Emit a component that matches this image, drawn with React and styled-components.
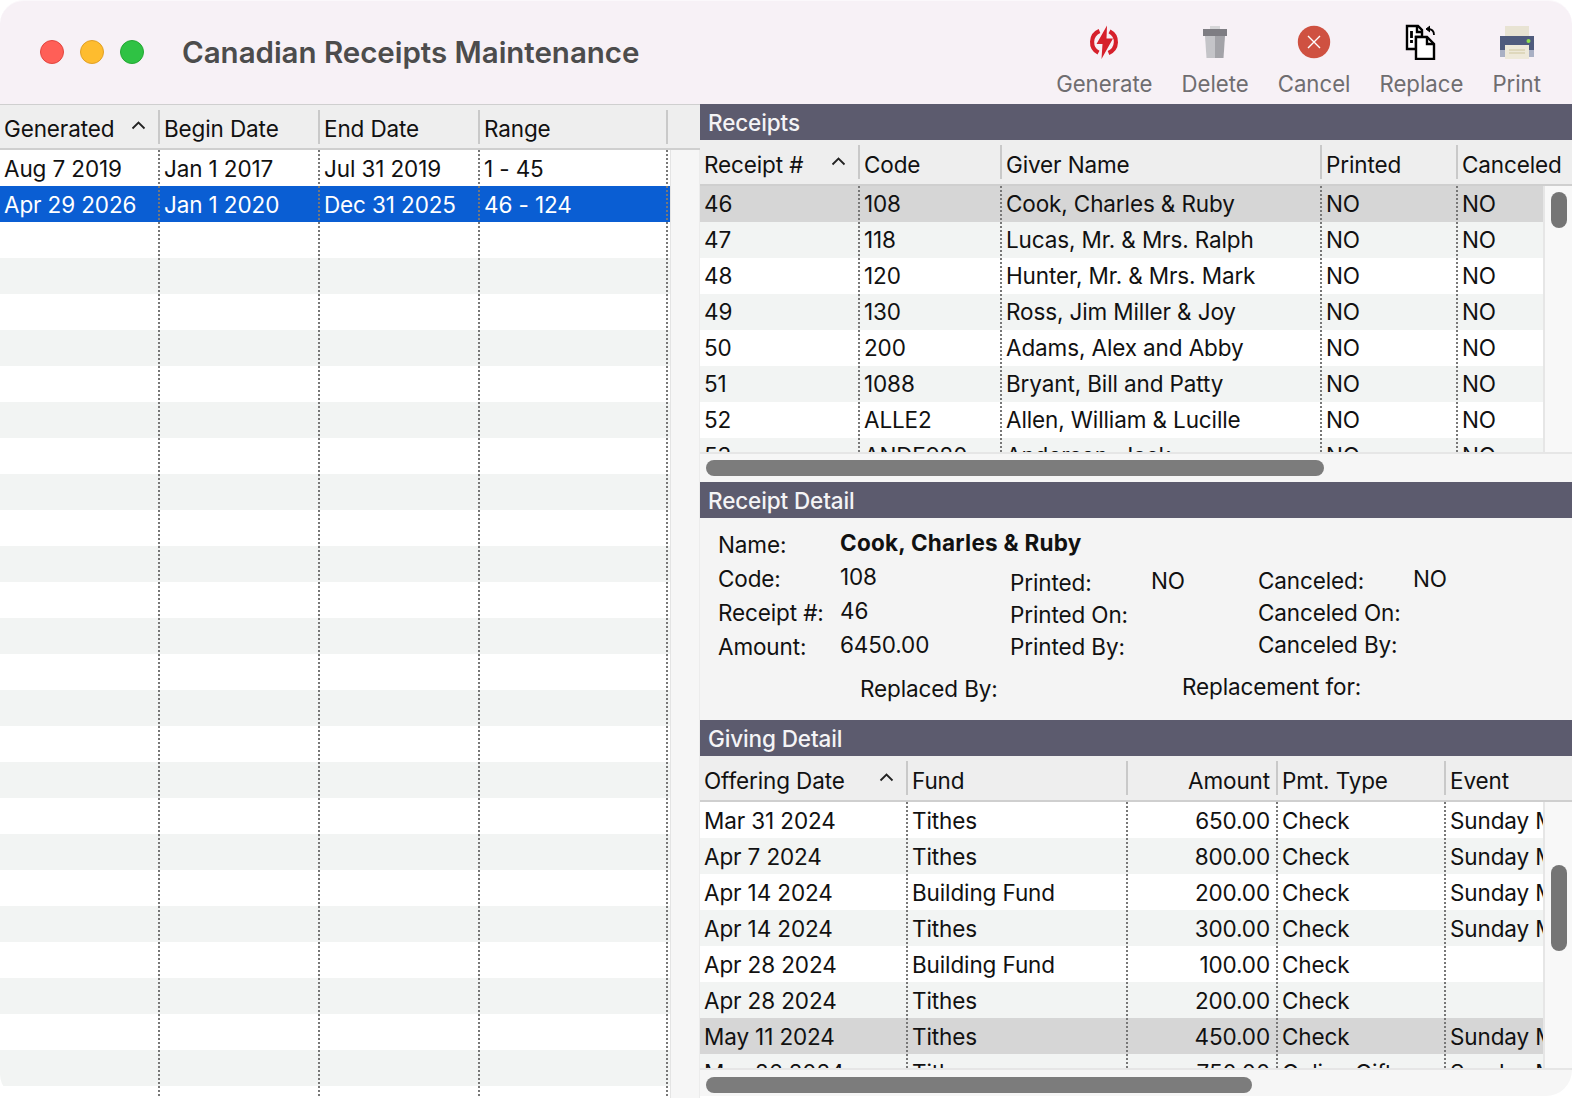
import React from "react";
import styled, { createGlobalStyle } from "styled-components";

const GlobalStyle = createGlobalStyle`
  html, body { margin: 0; padding: 0; background: #fff; }
  body { font-family: Inter, "Liberation Sans", sans-serif; color: #111; }
`;

const dotted = `linear-gradient(#777 50%, transparent 50%)`;

const Win = styled.div`
  width: 1572px;
  height: 1098px;
  overflow: hidden;
  display: flex;
  flex-direction: column;
  font-size: 22.5px;
  letter-spacing: -0.12px;
  background: #fff;
`;

const TitleBar = styled.header`
  height: 104px;
  flex: none;
  box-sizing: border-box;
  display: flex;
  align-items: flex-start;
  background: #f7f1f6;
  border-radius: 24px 24px 0 0;
  border-top: 1px solid #fbf8fb;
`;

const Lights = styled.div`
  display: flex;
  gap: 16px;
  margin: 39px 0 0 40px;
`;

const Light = styled.span`
  width: 24px;
  height: 24px;
  border-radius: 50%;
  box-sizing: border-box;
  background: ${p => p.$c};
  border: 1px solid ${p => p.$b};
`;

const Title = styled.h1`
  margin: 33px 0 0 38px;
  font-size: 29.5px;
  line-height: 36px;
  font-weight: 600;
  color: #4c4c4c;
  letter-spacing: -0.03px;
`;

const Toolbar = styled.div`
  margin-left: auto;
  display: flex;
  gap: 29px;
  padding: 23px 31px 0 0;
`;

const ToolButton = styled.div`
  display: flex;
  flex-direction: column;
  align-items: center;
  color: #6f6d70;
  font-size: 22.2px;
  letter-spacing: 0;
  line-height: 28px;
  svg { width: 36px; height: 36px; margin-bottom: 10px; display: block; }
`;

const Body = styled.div`
  flex: 1;
  min-height: 0;
  display: flex;
`;

const LeftPane = styled.section`
  width: 700px;
  flex: none;
  display: flex;
  flex-direction: column;
  border-bottom-left-radius: 24px;
  overflow: hidden;
  background: #fff;
`;

const Gutter = styled.div`
  flex: 1;
  background: #f6f6f6;
  border-left: 1px solid #e4e4e4;
  border-right: 1px solid #ececec;
`;

const LeftBody = styled.div`
  flex: 1;
  min-height: 0;
  display: flex;
`;

const LeftRows = styled.div`
  width: 670px;
  flex: none;
`;

const HeaderRow = styled.div`
  height: ${p => p.$h}px;
  box-sizing: border-box;
  display: flex;
  align-items: stretch;
  background: #eeeeee;
  border-top: ${p => (p.$top ? "1px solid #cfcfcf" : "0")};
  border-bottom: 2px solid #cfcfcf;
  flex: none;
  overflow: hidden;
`;

const HeaderCell = styled.div`
  width: ${p => p.$w}px;
  flex: none;
  box-sizing: border-box;
  padding: ${p => p.$pt}px 14px 0 4px;
  display: flex;
  align-items: center;
  justify-content: ${p => (p.$right ? "flex-end" : "space-between")};
  padding-right: ${p => (p.$right ? 8 : 14)}px;
  white-space: nowrap;
  background: linear-gradient(#c9c9c9, #c9c9c9) right center / 2px 34px no-repeat;
  background-image: ${p => (p.$last ? "none" : undefined)};
`;

const Row = styled.div`
  height: 36px;
  display: flex;
  background: ${p => (p.$sel === "blue" ? "#0a5ed3" : p.$sel === "grey" ? "#d6d6d6" : p.$alt ? "#f2f4f3" : "#fff")};
  color: ${p => (p.$sel === "blue" ? "#fff" : "#111")};
`;

const Cell = styled.div`
  width: ${p => p.$w}px;
  flex: none;
  box-sizing: border-box;
  padding: ${p => p.$pt || 0}px ${p => (p.$right ? 8 : 0)}px 0 4px;
  line-height: 36px;
  white-space: nowrap;
  overflow: hidden;
  text-align: ${p => (p.$right ? "right" : "left")};
  background: ${dotted} right top / 2px 4px repeat-y;
  background-image: ${p => (p.$last ? "none" : undefined)};
`;

const RightPane = styled.section`
  flex: 1;
  min-width: 0;
  height: 992px;
  display: flex;
  flex-direction: column;
  background: #f6f6f6;
  border-bottom-right-radius: 26px;
  overflow: hidden;
`;

const SectionBar = styled.h2`
  margin: 0;
  height: 36px;
  flex: none;
  padding-left: 8px;
  background: #5c5b6e;
  color: #f4f4f6;
  font-size: 22.5px;
  font-weight: 500;
  line-height: 38px;
`;

const TableRegion = styled.div`
  height: ${p => p.$h}px;
  flex: none;
  display: flex;
  border-bottom: 2px solid #e6e6e6;
`;

const Clip = styled.div`
  flex: 1;
  min-width: 0;
  overflow: hidden;
`;

const VTrack = styled.div`
  width: 29px;
  flex: none;
  box-sizing: border-box;
  background: #f8f8f8;
  border-left: 2px solid #e6e6e6;
  padding: ${p => p.$top}px 0 0 6px;
`;

const VThumb = styled.div`
  width: 16px;
  height: ${p => p.$h}px;
  border-radius: 8px;
  background: #757575;
`;

const HTrack = styled.div`
  height: ${p => p.$h}px;
  flex: none;
  box-sizing: border-box;
  padding: ${p => p.$pt}px 0 0 6px;
`;

const HThumb = styled.div`
  width: ${p => p.$w}px;
  height: 16px;
  border-radius: 8px;
  background: #7c7c7c;
`;

const Detail = styled.div`
  height: 202px;
  flex: none;
  box-sizing: border-box;
  background: #f4f4f4;
  display: flex;
  flex-direction: column;
`;

const DetailTop = styled.div`
  height: 146px;
  flex: none;
  display: flex;
  padding-left: ${p => p.$pl}px;
`;

const FieldCol = styled.div`
  width: ${p => p.$w}px;
  flex: none;
  padding-top: ${p => p.$top}px;
`;

const Field = styled.div`
  height: ${p => p.$h}px;
  display: flex;
  align-items: center;
`;

const Label = styled.span`
  width: ${p => p.$w}px;
  flex: none;
  white-space: nowrap;
`;

const Value = styled.span`
  font-weight: ${p => (p.$strong ? 700 : 400)};
  letter-spacing: ${p => (p.$strong ? "0.24px" : "inherit")};
  padding-bottom: 4px;
  white-space: nowrap;
`;

const DetailFoot = styled.div`
  display: flex;
  padding: 7px 0 0 160px;
  height: 33px;
`;

const FootLabel = styled.span`
  width: ${p => p.$w}px;
  flex: none;
  margin-top: ${p => p.$drop || 0}px;
  line-height: 32px;
  white-space: nowrap;
`;

const Caret = () => (
  <svg width="15" height="9" viewBox="0 0 15 9" fill="none" style={{ marginBottom: 6, flex: "none" }}>
    <path d="M1.5 7.5 7.5 1.5l6 6" stroke="#222" strokeWidth="1.8" />
  </svg>
);

const Generate = () => (
  <svg viewBox="0 0 36 36">
    <path d="M13.500 7A12 12 0 0 0 12.500 28.700" fill="none" stroke="#d6202b" strokeWidth="4.200" />
    <path d="M23.500 7.300A12 12 0 0 1 22.500 29" fill="none" stroke="#d6202b" strokeWidth="4.200" />
    <path d="M21 1.500 10.500 20H16.500L15.500 35 27 14.500H20.500z" fill="#d6202b" />
  </svg>
);

const Trash = () => (
  <svg viewBox="0 0 36 36">
    <rect x="13" y="2" width="10" height="3" fill="#d6d6d8" />
    <rect x="6" y="5" width="24" height="7" fill="#7e7d83" />
    <path d="M8 12h10v22h-8.500z" fill="#c4c4c8" />
    <path d="M18 12h10l-1.500 22H18z" fill="#a3a3a8" />
  </svg>
);

const CancelIcon = () => (
  <svg viewBox="0 0 36 36">
    <circle cx="18" cy="18" r="16.200" fill="#cf5141" />
    <path d="M12 12l12 12M24 12 12 24" stroke="#fff" strokeWidth="1.400" />
  </svg>
);

const ReplaceIcon = () => (
  <svg viewBox="0 0 36 36" fill="none" stroke="#000" strokeWidth="2.400">
    <path d="M4 2h11l4 4v7h-6v12H4z" fill="#fff" />
    <path d="M8.500 7v7M8.500 16v3" strokeWidth="2.800" />
    <path d="M14 3v5h5" />
    <path d="M13 13h11l7 7v15H13z" fill="#fff" />
    <path d="M24 13v7h7" />
    <path d="M31 11c0-4-2-6-6-6" strokeWidth="1.800" />
    <path d="M27 2l-4 3 4 3" fill="#000" strokeWidth="1" />
  </svg>
);

const PrintIcon = () => (
  <svg viewBox="0 0 36 36">
    <rect x="6" y="2" width="24" height="11" fill="#e8e3d3" />
    <rect x="1" y="12" width="34" height="14" fill="#4f5b7d" />
    <rect x="1" y="26" width="34" height="7" fill="#a9b0c4" />
    <rect x="6" y="21" width="24" height="14" fill="#eee9d9" />
    <path d="M10 26h16M10 29h16" stroke="#cfc79f" strokeWidth="1" />
    <circle cx="29.500" cy="17" r="2" fill="#8fe04f" />
  </svg>
);

const tools = [
  ["Generate", Generate],
  ["Delete", Trash],
  ["Cancel", CancelIcon],
  ["Replace", ReplaceIcon],
  ["Print", PrintIcon],
];

const leftCols = [160, 160, 160, 188];
const leftHead = ["Generated", "Begin Date", "End Date", "Range"];
const leftRows = [
  ["Aug 7 2019", "Jan 1 2017", "Jul 31 2019", "1 - 45"],
  ["Apr 29 2026", "Jan 1 2020", "Dec 31 2025", "46 - 124"],
  ...Array.from({ length: 25 }, () => ["", "", "", ""]),
];

const receiptCols = [160, 142, 320, 136, 114];
const receiptHead = ["Receipt #", "Code", "Giver Name", "Printed", "Canceled"];
const receipts = [
  ["46", "108", "Cook, Charles & Ruby", "NO", "NO"],
  ["47", "118", "Lucas, Mr. & Mrs. Ralph", "NO", "NO"],
  ["48", "120", "Hunter, Mr. & Mrs. Mark", "NO", "NO"],
  ["49", "130", "Ross, Jim Miller & Joy", "NO", "NO"],
  ["50", "200", "Adams, Alex and Abby", "NO", "NO"],
  ["51", "1088", "Bryant, Bill and Patty", "NO", "NO"],
  ["52", "ALLE2", "Allen, William & Lucille", "NO", "NO"],
  ["53", "ANDE920", "Anderson, Jack", "NO", "NO"],
];

const givingCols = [208, 220, 150, 168, 130];
const givingHead = ["Offering Date", "Fund", "Amount", "Pmt. Type", "Event"];
const giving = [
  ["Mar 31 2024", "Tithes", "650.00", "Check", "Sunday Morning"],
  ["Apr 7 2024", "Tithes", "800.00", "Check", "Sunday Morning"],
  ["Apr 14 2024", "Building Fund", "200.00", "Check", "Sunday Morning"],
  ["Apr 14 2024", "Tithes", "300.00", "Check", "Sunday Morning"],
  ["Apr 28 2024", "Building Fund", "100.00", "Check", ""],
  ["Apr 28 2024", "Tithes", "200.00", "Check", ""],
  ["May 11 2024", "Tithes", "450.00", "Check", "Sunday Morning"],
  ["May 26 2024", "Tithes", "750.00", "Online Gift", "Sunday Morning"],
];

const Head = ({ cols, labels, height, top, pt, rightCol, noLastSep }) => (
  <HeaderRow $h={height} $top={top}>
    {labels.map((label, i) => (
      <HeaderCell key={label} $w={cols[i]} $pt={pt} $right={i === rightCol} $last={noLastSep && i === labels.length - 1}>
        {label}
        {i === 0 && <Caret />}
      </HeaderCell>
    ))}
  </HeaderRow>
);

const Rows = ({ cols, rows, selected, selTone, pt, rightCol, noLastSep }) =>
  rows.map((row, r) => (
    <Row key={r} $alt={r % 2 === 1} $sel={r === selected ? selTone : undefined}>
      {row.map((text, i) => (
        <Cell key={i} $w={cols[i]} $pt={pt} $right={i === rightCol} $last={noLastSep && i === row.length - 1}>
          {text}
        </Cell>
      ))}
    </Row>
  ));

export default function App() {
  return (
    <>
      <GlobalStyle />
      <Win>
        <TitleBar>
          <Lights>
            <Light $c="#ff5f57" $b="#e2463f" />
            <Light $c="#febc2e" $b="#e1a026" />
            <Light $c="#2fc244" $b="#24a833" />
          </Lights>
          <Title>Canadian Receipts Maintenance</Title>
          <Toolbar>
            {tools.map(([label, Icon]) => (
              <ToolButton key={label}>
                <Icon />
                {label}
              </ToolButton>
            ))}
          </Toolbar>
        </TitleBar>
        <Body>
          <LeftPane>
            <Head cols={leftCols} labels={leftHead} height={46} top pt={3} />
            <LeftBody>
              <LeftRows>
                <Rows cols={leftCols} rows={leftRows} selected={1} selTone="blue" pt={1} />
              </LeftRows>
              <Gutter />
            </LeftBody>
          </LeftPane>
          <RightPane>
            <SectionBar>Receipts</SectionBar>
            <Head cols={receiptCols} labels={receiptHead} height={46} pt={4} noLastSep />
            <TableRegion $h={266}>
              <Clip>
                <Rows cols={receiptCols} rows={receipts} selected={0} selTone="grey" noLastSep />
              </Clip>
              <VTrack $top={6}>
                <VThumb $h={36} />
              </VTrack>
            </TableRegion>
            <HTrack $h={28} $pt={6}>
              <HThumb $w={618} />
            </HTrack>
            <SectionBar>Receipt Detail</SectionBar>
            <Detail>
              <DetailTop $pl={18}>
                <FieldCol $w={292} $top={9}>
                  <Field $h={34}>
                    <Label $w={122}>Name:</Label>
                    <Value $strong>Cook, Charles &amp; Ruby</Value>
                  </Field>
                  <Field $h={34}>
                    <Label $w={122}>Code:</Label>
                    <Value>108</Value>
                  </Field>
                  <Field $h={34}>
                    <Label $w={122}>Receipt #:</Label>
                    <Value>46</Value>
                  </Field>
                  <Field $h={34}>
                    <Label $w={122}>Amount:</Label>
                    <Value>6450.00</Value>
                  </Field>
                </FieldCol>
                <FieldCol $w={248} $top={48}>
                  <Field $h={32}>
                    <Label $w={141}>Printed:</Label>
                    <Value>NO</Value>
                  </Field>
                  <Field $h={32}>
                    <Label $w={141}>Printed On:</Label>
                  </Field>
                  <Field $h={32}>
                    <Label $w={141}>Printed By:</Label>
                  </Field>
                </FieldCol>
                <FieldCol $w={300} $top={46}>
                  <Field $h={32}>
                    <Label $w={155}>Canceled:</Label>
                    <Value>NO</Value>
                  </Field>
                  <Field $h={32}>
                    <Label $w={155}>Canceled On:</Label>
                  </Field>
                  <Field $h={32}>
                    <Label $w={155}>Canceled By:</Label>
                  </Field>
                </FieldCol>
              </DetailTop>
              <DetailFoot>
                <FootLabel $w={322} $drop={2}>Replaced By:</FootLabel>
                <FootLabel>Replacement for:</FootLabel>
              </DetailFoot>
            </Detail>
            <SectionBar>Giving Detail</SectionBar>
            <Head cols={givingCols} labels={givingHead} height={46} pt={4} rightCol={2} noLastSep />
            <TableRegion $h={266}>
              <Clip>
                <Rows cols={givingCols} rows={giving} selected={6} selTone="grey" pt={1} rightCol={2} noLastSep />
              </Clip>
              <VTrack $top={63}>
                <VThumb $h={86} />
              </VTrack>
            </TableRegion>
            <HTrack $h={28} $pt={7}>
              <HThumb $w={546} />
            </HTrack>
          </RightPane>
        </Body>
      </Win>
    </>
  );
}
